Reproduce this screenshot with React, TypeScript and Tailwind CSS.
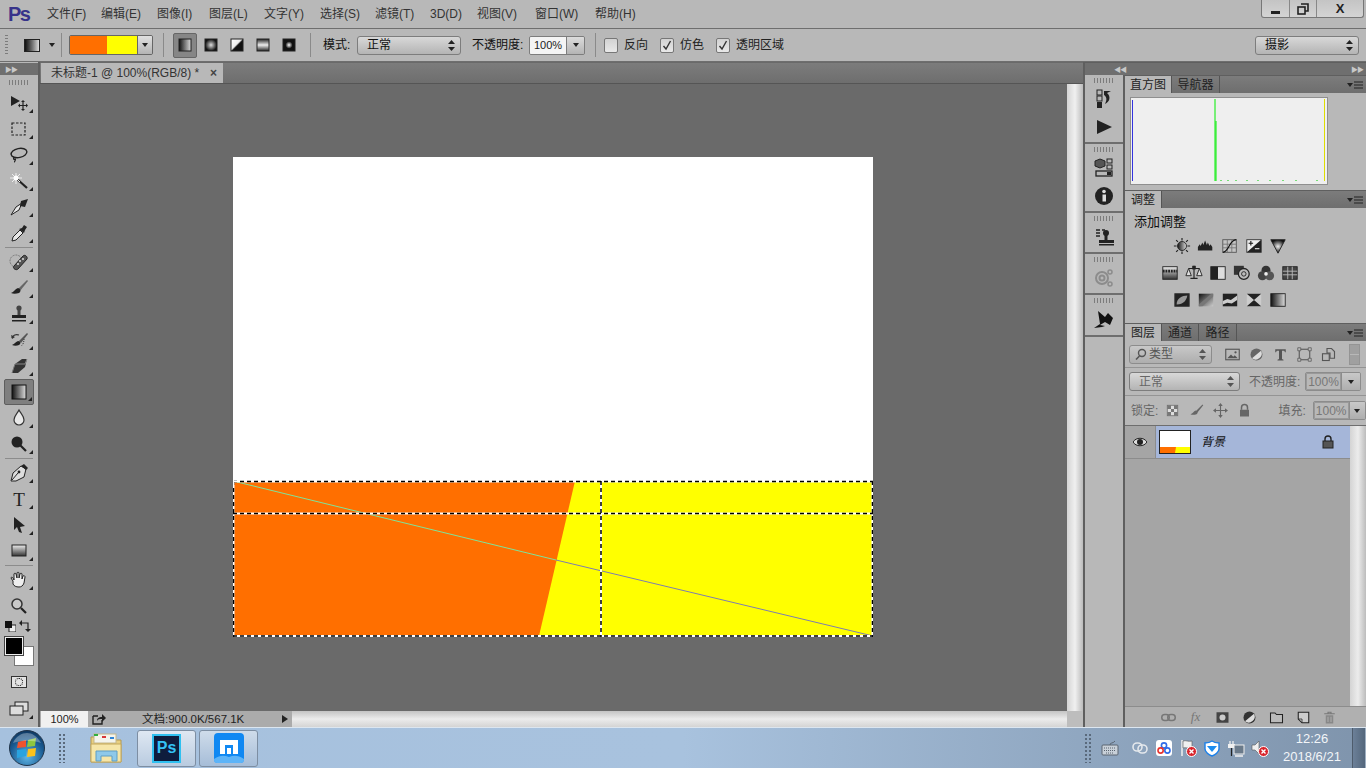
import type { ReactNode } from 'react'

const FONT = "font-['Liberation_Sans','Noto_Sans_CJK_SC',sans-serif]"

function Grip({ w = 'w-[28px]' }: { w?: string }) {
  return <div className={`${w} h-[5px] bg-[repeating-linear-gradient(90deg,#7c7c7c_0_1px,transparent_1px_3px)]`} />
}

function Ico({ size = 20, children }: { size?: number; children: ReactNode }) {
  return (
    <svg width={size} height={size} viewBox="0 0 20 20" className="block shrink-0">
      <defs>
        <linearGradient id="gh" x1="0" x2="1" y1="0" y2="0">
          <stop offset="0" stopColor="#111" />
          <stop offset="1" stopColor="#ddd" />
        </linearGradient>
        <linearGradient id="gv" x1="0" x2="0" y1="0" y2="1">
          <stop offset="0" stopColor="#eee" />
          <stop offset="1" stopColor="#333" />
        </linearGradient>
        <linearGradient id="gd" x1="0" x2="1" y1="0" y2="1">
          <stop offset="0" stopColor="#111" />
          <stop offset="1" stopColor="#ccc" />
        </linearGradient>
        <radialGradient id="gr">
          <stop offset="0" stopColor="#eee" />
          <stop offset="1" stopColor="#111" />
        </radialGradient>
      </defs>
      {children}
    </svg>
  )
}

function Tool({ children, corner = true, active = false, sep = false }: { children: ReactNode; corner?: boolean; active?: boolean; sep?: boolean }) {
  return (
    <>
      {sep && <div className="h-px mx-[5px] my-[1px] bg-[#8c8c8c]" />}
      <div className={`relative h-[26px] flex items-center justify-center ${active ? 'mx-[4px] rounded-[2px] border border-[#5e5e5e] bg-[#7f7f7f]' : ''}`}>
        {children}
        {corner && <span className={`absolute bottom-[3px] w-0 h-0 border-l-[4px] border-l-transparent border-b-[4px] border-b-[#222] ${active ? 'right-[1px]' : 'right-[5px]'}`} />}
      </div>
    </>
  )
}

function Tools() {
  return (
    <div className="flex flex-col">
      <Tool>
        <Ico><path d="M2 3l9 5-9 5z" fill="#222" /><path d="M14 8v9M10 12.5h8" stroke="#222" strokeWidth="1.2" /><path d="M14 7l-2 2h4zM14 18l-2-2h4zM9 12.5l2-2v4zM19 12.5l-2-2v4z" fill="#222" /></Ico>
      </Tool>
      <Tool>
        <Ico><rect x="3" y="4" width="13" height="12" fill="none" stroke="#222" strokeWidth="1.2" strokeDasharray="2.5 1.5" /></Ico>
      </Tool>
      <Tool>
        <Ico><ellipse cx="10" cy="8" rx="8" ry="4.5" transform="rotate(-12 10 8)" fill="none" stroke="#222" strokeWidth="1.4" /><path d="M5 12c-1 2 0 3 1 2s0 3-1 3" fill="none" stroke="#222" strokeWidth="1.3" /></Ico>
      </Tool>
      <Tool>
        <Ico><path d="M8 8l10 9" stroke="#222" strokeWidth="2.2" /><path d="M7 2v11M1 7h12M3 3l8 8M11 3l-8 8" stroke="#eee" strokeWidth="1" /><circle cx="7" cy="7" r="2.5" fill="#fff" /></Ico>
      </Tool>
      <Tool>
        <Ico><path d="M2 18l5-8 6-4-3 7z" fill="#e8e8e8" stroke="#222" /><path d="M12 4l7-2-3 8-5-1z" fill="#222" /></Ico>
      </Tool>
      <Tool>
        <Ico><path d="M3 18l1-4 7-7 3 3-7 7z" fill="#e8e8e8" stroke="#222" /><path d="M10 6l3-1 2-3 3 2-2 3-1 3z" fill="#222" /></Ico>
      </Tool>
      <Tool sep>
        <Ico><circle cx="7" cy="9" r="6" fill="none" stroke="#777" strokeDasharray="2 1" /><path d="M5 14L14 4c2-2 5 1 4 3l-9 10c-2 2-6-1-4-3z" fill="#555" stroke="#222" /><circle cx="11" cy="9" r="1" fill="#ddd" /><circle cx="9" cy="12" r="1" fill="#ddd" /><circle cx="14" cy="7" r="1" fill="#ddd" /></Ico>
      </Tool>
      <Tool>
        <Ico><path d="M9 11L18 2l1 1-8 10z" fill="#666" /><path d="M9 10c3 1 3 4 1 5-3 1-6 1-8 0 3-1 4-4 7-5z" fill="#222" /></Ico>
      </Tool>
      <Tool>
        <Ico><circle cx="10" cy="4" r="2.6" fill="#444" /><path d="M8.5 6h3v5h-3z" fill="#444" /><path d="M3 11h14v3H3z" fill="#222" /><path d="M3 16h14v1.5H3z" fill="#222" /></Ico>
      </Tool>
      <Tool>
        <Ico><path d="M10 11L18 3l1 1-7 9z" fill="#555" /><path d="M9 11c3 0 3 3 1 4-2 1-5 1-7 0 3-1 3-3 6-4z" fill="#222" /><path d="M3 8c1-3 4-4 7-3" fill="none" stroke="#333" strokeWidth="1.3" /><path d="M2 5l1 4 3-2z" fill="#333" /><path d="M15 9c0 3-1 6-3 7" fill="none" stroke="#333" strokeDasharray="1 1" /></Ico>
      </Tool>
      <Tool>
        <Ico><path d="M6 8l7-5h5l-2 8-7 6H3z" fill="#333" /><path d="M6 8h10l2-5" fill="none" stroke="#888" /><path d="M6 8L3 17" stroke="#777" /></Ico>
      </Tool>
      <Tool active>
        <Ico><rect x="3" y="3" width="14" height="14" fill="url(#gh)" stroke="#111" /></Ico>
      </Tool>
      <Tool>
        <Ico><path d="M10 2c2 4 5 6 5 10a5 5 0 0 1-10 0c0-4 3-6 5-10z" fill="#e8e8e8" stroke="#333" strokeWidth="1.2" /></Ico>
      </Tool>
      <Tool>
        <Ico><circle cx="8" cy="8" r="5.5" fill="#222" /><path d="M11 11l6 6" stroke="#222" strokeWidth="2.2" /></Ico>
      </Tool>
      <Tool sep>
        <Ico><path d="M2 18l2-8 8-7 5 3-2 8-8 4z" fill="#ddd" stroke="#222" /><path d="M12 3l3-2 4 4-2 2z" fill="#222" /><path d="M3 17l6-7" stroke="#222" /><circle cx="10" cy="9" r="1.4" fill="#222" /></Ico>
      </Tool>
      <Tool>
        <svg width="20" height="20" viewBox="0 0 20 20" className="block"><text x="10" y="17" textAnchor="middle" fontFamily="Liberation Serif" fontSize="19" fill="#222">T</text></svg>
      </Tool>
      <Tool>
        <Ico><path d="M5 2l11 9-5 1 2 6-3-1-2-5-3 3z" fill="#222" /></Ico>
      </Tool>
      <Tool>
        <Ico><rect x="3" y="4" width="14" height="11" fill="url(#gv)" stroke="#222" /></Ico>
      </Tool>
      <Tool sep>
        <Ico><path d="M4 11L2 8c0-1 1-1 2 0l1 2 0-6c0-1 2-1 2 0l1 4V3c0-1 2-1 2 0v5l1-4c0-1 2-1 2 0v5l1-3c1-1 2 0 2 1l-1 6c-1 3-3 4-5 4-3 0-5-1-6-3z" fill="#eee" stroke="#222" /></Ico>
      </Tool>
      <Tool corner={false}>
        <Ico><circle cx="8" cy="8" r="5" fill="#c8c8c8" stroke="#333" strokeWidth="1.5" /><path d="M12 12l5 5" stroke="#222" strokeWidth="2.2" /></Ico>
      </Tool>
    </div>
  )
}

function ColorWells() {
  return (
    <div className="flex flex-col px-[4px]">
      <div className="flex items-center justify-between h-[14px] px-[1px]">
        <svg width="11" height="11" viewBox="0 0 11 11" className="block"><rect x="4" y="4" width="7" height="7" fill="#eee" stroke="#222" /><rect x="0" y="0" width="7" height="7" fill="#111" /></svg>
        <svg width="12" height="12" viewBox="0 0 12 12" className="block mr-[2px]"><path d="M2 3h7v7" fill="none" stroke="#222" strokeWidth="1.2" /><path d="M0 3l3-3v6zM9 12l3-3H6z" fill="#222" /></svg>
      </div>
      <div className="relative h-[30px] mt-[4px]">
        <div className="absolute left-[10px] top-[9px] w-[20px] h-[20px] bg-white border border-[#777]" />
        <div className="absolute left-[1px] top-0 w-[18px] h-[18px] bg-black border border-[#eee] outline outline-[#444]" />
      </div>
    </div>
  )
}

function ToolBox() {
  return (
    <div className="w-[40px] flex flex-col shrink-0 bg-[#b8b8b8] border-r-2 border-[#5f5f5f]">
      <div className="h-[12px] mt-[1px] bg-[#6f6f6f] flex items-center pl-[5px]">
        <span className="text-[7px] leading-none text-[#c8c8c8] tracking-[-1px]">▶▶</span>
      </div>
      <div className="h-[15px] flex items-center justify-center"><Grip w="w-[20px]" /></div>
      <Tools />
      <ColorWells />
      <div className="h-[30px] flex items-center justify-center">
        <div className="w-[16px] h-[12px] bg-[#e4e4e4] border border-[#333] flex items-center justify-center">
          <div className="w-[8px] h-[8px] rounded-full border border-dotted border-black" />
        </div>
      </div>
      <div className="relative h-[24px] flex items-center justify-center">
        <svg width="20" height="16" viewBox="0 0 20 16" className="block"><rect x="6" y="1" width="13" height="9" fill="#ddd" stroke="#222" /><rect x="1" y="5" width="13" height="9" fill="#ddd" stroke="#222" /></svg>
        <span className="absolute bottom-[2px] right-[5px] w-0 h-0 border-l-[4px] border-l-transparent border-b-[4px] border-b-[#222]" />
      </div>
    </div>
  )
}

function Sep() {
  return <div className="w-px h-[24px] bg-[#8a8a8a] shrink-0" />
}

function Caret() {
  return <span className="block w-0 h-0 border-x-[3px] border-x-transparent border-t-[4px] border-t-[#222]" />
}

function UpDown({ color = '#333' }: { color?: string }) {
  return (
    <svg width="7" height="11" viewBox="0 0 7 11" className="block"><path d="M0 4l3.5-4L7 4zM0 7l3.5 4L7 7z" fill={color} /></svg>
  )
}

function Select({ label, w, dim = false }: { label: string; w: string; dim?: boolean }) {
  return (
    <div className={`${w} h-[19px] rounded-[3px] border border-[#7d7d7d] bg-linear-to-b from-[#d8d8d8] to-[#b4b4b4] flex items-center justify-between pl-[9px] pr-[5px] shrink-0`}>
      <span className={`text-[12px] leading-none ${dim ? 'text-[#666]' : 'text-[#111]'}`}>{label}</span>
      <UpDown color={dim ? '#555' : '#222'} />
    </div>
  )
}

function Check({ checked, label, className }: { checked: boolean; label: string; className: string }) {
  return (
    <div className={`flex items-center gap-[6px] ${className}`}>
      <div className="w-[14px] h-[15px] rounded-[2px] border border-[#777] bg-linear-to-b from-[#d2d2d2] to-[#e8e8e8] flex items-center justify-center">
        {checked && <svg width="10" height="11" viewBox="0 0 10 11" className="block"><path d="M1.5 6l2.5 3 4.5-8" fill="none" stroke="#333" strokeWidth="1.4" /></svg>}
      </div>
      <span className="text-[12px] text-[#222]">{label}</span>
    </div>
  )
}

const menus: [string, string][] = [
  ['文件(F)', 'w-[54px]'],
  ['编辑(E)', 'w-[56px]'],
  ['图像(I)', 'w-[52px]'],
  ['图层(L)', 'w-[55px]'],
  ['文字(Y)', 'w-[56px]'],
  ['选择(S)', 'w-[55px]'],
  ['滤镜(T)', 'w-[55px]'],
  ['3D(D)', 'w-[47px]'],
  ['视图(V)', 'w-[58px]'],
  ['窗口(W)', 'w-[60px]'],
  ['帮助(H)', 'w-[50px]'],
]

function MenuBar() {
  return (
    <div className="h-[29px] shrink-0 flex items-center bg-[#b8b8b8] border-b border-[#6e6e6e]">
      <span className="w-[47px] pl-[8px] text-[#37338a] text-[20px] leading-none font-bold tracking-[-1.5px] font-['Liberation_Sans']">Ps</span>
      {menus.map(([label, w]) => (
        <span key={label} className={`${w} text-[12px] text-[#333] whitespace-nowrap`}>{label}</span>
      ))}
      <div className="ml-auto mr-[2px] self-start flex h-[18px] border border-t-0 border-[#777] rounded-b-[3px] bg-linear-to-b from-[#c4c4c4] to-[#d4d4d4]">
        <div className="w-[28px] flex items-end justify-center pb-[3px] border-r border-[#888]"><div className="w-[9px] h-[3px] bg-[#222]" /></div>
        <div className="w-[27px] flex items-center justify-center border-r border-[#888]">
          <svg width="12" height="12" viewBox="0 0 12 12" className="block"><path d="M4 1h7v7H8" fill="none" stroke="#222" strokeWidth="1.6" /><rect x="1" y="4" width="7" height="7" fill="none" stroke="#222" strokeWidth="1.6" /></svg>
        </div>
        <div className="w-[46px] flex items-center justify-center text-[13px] leading-none font-bold text-[#222] font-['Liberation_Sans']">X</div>
      </div>
    </div>
  )
}

function GradSwatch({ fill }: { fill: string }) {
  return (
    <svg width="16" height="16" viewBox="0 0 16 16" className="block">
      <defs>
        <linearGradient id="o1" x1="0" x2="1" y1="0" y2="0"><stop offset="0" stopColor="#111" /><stop offset="1" stopColor="#ddd" /></linearGradient>
        <radialGradient id="o2"><stop offset="0" stopColor="#ddd" /><stop offset="1" stopColor="#111" /></radialGradient>
        <linearGradient id="o3" x1="0" x2="1" y1="0" y2="1"><stop offset="0" stopColor="#fff" /><stop offset=".45" stopColor="#eee" /><stop offset=".55" stopColor="#111" /><stop offset="1" stopColor="#111" /></linearGradient>
        <linearGradient id="o4" x1="0" x2="0" y1="0" y2="1"><stop offset="0" stopColor="#222" /><stop offset=".5" stopColor="#eee" /><stop offset="1" stopColor="#222" /></linearGradient>
        <radialGradient id="o5"><stop offset="0" stopColor="#fff" /><stop offset=".6" stopColor="#111" /><stop offset="1" stopColor="#111" /></radialGradient>
      </defs>
      <rect x="2" y="2" width="12" height="12" fill={fill} stroke="#222" />
    </svg>
  )
}

function OptionsBar() {
  return (
    <div className="h-[33px] shrink-0 flex items-center bg-[#b8b8b8] border-b border-[#6e6e6e]">
      <div className="w-[3px] h-[20px] ml-[5px] bg-[repeating-linear-gradient(180deg,#7c7c7c_0_1px,transparent_1px_3px)]" />
      <div className="ml-[16px] w-[16px] h-[13px] border border-[#222] bg-linear-to-r from-[#111] to-[#ddd]" />
      <div className="ml-[8px] w-[8px] flex justify-center"><Caret /></div>
      <div className="ml-[5px]"><Sep /></div>
      <div className="ml-[7px] w-[84px] h-[20px] flex border border-[#666] rounded-[2px] overflow-hidden">
        <div className="w-[37px] bg-[#ff6f00]" />
        <div className="w-[30px] bg-[#ffff00]" />
        <div className="flex-1 bg-linear-to-b from-[#e0e0e0] to-[#b4b4b4] flex items-center justify-center border-l border-[#666]"><Caret /></div>
      </div>
      <div className="ml-[10px]"><Sep /></div>
      <div className="ml-[9px] w-[24px] h-[25px] rounded-[2px] border border-[#666] bg-[#868686] flex items-center justify-center"><GradSwatch fill="url(#o1)" /></div>
      <div className="w-[28px] flex justify-center"><GradSwatch fill="url(#o2)" /></div>
      <div className="w-[24px] flex justify-center"><GradSwatch fill="url(#o3)" /></div>
      <div className="w-[28px] flex justify-center"><GradSwatch fill="url(#o4)" /></div>
      <div className="w-[24px] flex justify-center"><GradSwatch fill="url(#o5)" /></div>
      <div className="ml-[9px]"><Sep /></div>
      <span className="ml-[12px] w-[34px] text-[12px] text-[#111]">模式:</span>
      <Select label="正常" w="w-[104px]" />
      <span className="ml-[11px] w-[57px] text-[12px] text-[#111] whitespace-nowrap">不透明度:</span>
      <div className="w-[56px] h-[19px] flex border border-[#7d7d7d] rounded-[2px] overflow-hidden">
        <div className="w-[36px] bg-[#f4f4f4] flex items-center justify-center text-[11px] text-[#222]">100%</div>
        <div className="flex-1 bg-linear-to-b from-[#dcdcdc] to-[#b4b4b4] border-l border-[#7d7d7d] flex items-center justify-center"><Caret /></div>
      </div>
      <div className="ml-[10px]"><Sep /></div>
      <Check checked={false} label="反向" className="ml-[8px]" />
      <Check checked label="仿色" className="ml-[12px]" />
      <Check checked label="透明区域" className="ml-[12px]" />
      <div className="ml-auto mr-[7px]"><Select label="摄影" w="w-[104px]" /></div>
    </div>
  )
}

function Canvas() {
  const ants = 'M0 324.5H640M0 356.5H640M0 479H640M.5 324V480M368 324V480M639.5 324V480'
  return (
    <svg width="640" height="480" viewBox="0 0 640 480" className="block">
      <rect width="640" height="480" fill="#fff" />
      <rect y="324" width="640" height="155" fill="#ffff00" />
      <path d="M0 324H342L306 479H0z" fill="#ff6f00" />
      <path d="M0 324L323 403" stroke="#7fe39a" strokeWidth="1" />
      <path d="M323 403L640 479" stroke="#7d7db0" strokeWidth="1" />
      <path d={ants} fill="none" stroke="#fff" strokeWidth="2" />
      <path d={ants} fill="none" stroke="#000" strokeWidth="1.5" strokeDasharray="4 3" />
      <path d="M0 324.5H4M.5 321V328" stroke="#fff" />
    </svg>
  )
}

function DocArea() {
  return (
    <div className="flex-1 flex flex-col min-w-0 bg-[#6a6a6a]">
      <div className="h-[21px] mt-[1px] shrink-0 flex items-end pl-[1px] bg-linear-to-b from-[#7c7c7c] to-[#6e6e6e] border-b border-[#555]">
        <div className="w-[182px] h-[20px] flex items-center justify-between bg-[#b8b8b8] pl-[10px] pr-[6px]">
          <span className="text-[12px] text-[#333] whitespace-nowrap">未标题-1 @ 100%(RGB/8) *</span>
          <span className="text-[12px] leading-none font-bold text-[#444]">×</span>
        </div>
      </div>
      <div className="flex-1 flex min-h-0">
        <div className="flex-1 pl-[193px] pt-[73px] bg-[#6a6a6a]"><Canvas /></div>
        <div className="w-[16px] bg-linear-to-r from-[#d4d4d4] via-[#f0f0f0] to-[#bcbcbc]" />
      </div>
      <div className="h-[16px] shrink-0 flex items-stretch bg-[#ababab] mb-0">
        <div className="w-[1px] bg-[#ababab]" />
        <div className="w-[47px] bg-[#f0f0f0] flex items-center justify-center text-[11px] text-[#222]">100%</div>
        <div className="w-[4px]" />
        <div className="w-[14px] flex items-center justify-center">
          <svg width="14" height="12" viewBox="0 0 14 12" className="block"><path d="M1 3h5M1 3v8h9V7" fill="none" stroke="#222" strokeWidth="1.4" /><path d="M5 8c0-3 2-4 5-4V1l4 4-4 4V6C8 6 6 6 5 8z" fill="#222" /></svg>
        </div>
        <div className="w-[36px]" />
        <span className="w-[139px] text-[11.5px] leading-[16px] text-[#222] whitespace-nowrap">文档:900.0K/567.1K</span>
        <div className="w-[8px] flex items-center justify-center"><span className="block w-0 h-0 border-y-[4px] border-y-transparent border-l-[6px] border-l-[#222]" /></div>
        <div className="w-[3px]" />
        <div className="flex-1 bg-linear-to-b from-[#c4c4c4] via-[#ececec] to-[#d4d4d4]" />
        <div className="w-[16px] bg-[#bdbdbd]" />
      </div>
    </div>
  )
}

function DockGroup({ h, children }: { h: string; children: ReactNode }) {
  return (
    <div className={`${h} shrink-0 flex flex-col items-center border-b-2 border-[#6e6e6e] bg-[#b8b8b8] gap-[8px]`}>
      <div className="pt-[3px] -mb-[2px]"><Grip w="w-[20px]" /></div>
      {children}
    </div>
  )
}

function Dock() {
  return (
    <div className="w-[42px] shrink-0 flex flex-col border-x-2 border-[#5f5f5f] bg-[#b8b8b8]">
      <DockGroup h="h-[69px]">
        <Ico>
          <rect x="3" y="1" width="5" height="5" fill="none" stroke="#222" /><rect x="3" y="7" width="5" height="5" fill="none" stroke="#222" /><rect x="3" y="13" width="5" height="6" fill="#222" />
          <path d="M10 2h7l-4 2c4 3 3 9-2 11 2-4 2-7-1-9z" fill="#222" />
        </Ico>
        <Ico><path d="M3 3l15 7-15 7z" fill="#222" /></Ico>
      </DockGroup>
      <DockGroup h="h-[69px]">
        <Ico>
          <path d="M6 1l5 2v5l-5 2-5-2V3z" fill="#555" stroke="#222" /><rect x="13" y="1" width="5" height="4" fill="none" stroke="#222" /><rect x="13" y="7" width="5" height="4" fill="none" stroke="#222" /><rect x="2" y="13" width="16" height="5" fill="none" stroke="#222" strokeWidth="1.3" /><rect x="13" y="14" width="4" height="3" fill="#222" />
        </Ico>
        <Ico><circle cx="10" cy="10" r="9" fill="#222" /><rect x="8.5" y="8.5" width="3.5" height="7" fill="#ddd" /><circle cx="10" cy="5.5" r="1.8" fill="#ddd" /></Ico>
      </DockGroup>
      <DockGroup h="h-[41px]">
        <Ico><path d="M2 3h4M2 6h4M2 9h4M8 3h3" stroke="#222" strokeWidth="1.4" /><circle cx="12" cy="6" r="3" fill="#222" /><rect x="10.5" y="8" width="3" height="5" fill="#222" /><rect x="5" y="13" width="15" height="3" fill="#222" /><rect x="5" y="17" width="15" height="1.5" fill="#222" /></Ico>
      </DockGroup>
      <DockGroup h="h-[41px]">
        <Ico><circle cx="8" cy="10" r="6" fill="none" stroke="#8c8c8c" strokeWidth="2" /><circle cx="8" cy="10" r="2.5" fill="none" stroke="#8c8c8c" strokeWidth="2" /><circle cx="16" cy="4" r="2" fill="none" stroke="#8c8c8c" strokeWidth="1.5" /><circle cx="16" cy="16" r="2" fill="none" stroke="#8c8c8c" strokeWidth="1.5" /></Ico>
      </DockGroup>
      <DockGroup h="h-[42px]">
        <Ico><path d="M0 19l6-4L4 2l7 6 3-4 5 5-3 7-5-3-5 3 5 1-3 1z" fill="#111" /></Ico>
      </DockGroup>
      <div className="flex-1" />
    </div>
  )
}

function PanelHead({ tabs }: { tabs: [string, string][] }) {
  return (
    <div className="h-[18px] shrink-0 flex items-stretch bg-linear-to-b from-[#7c7c7c] to-[#6e6e6e] border-t border-[#5f5f5f]">
      {tabs.map(([label, w], i) => (
        <div key={label} className={`${w} flex items-center justify-center text-[12px] border-r border-[#555] ${i === 0 ? 'bg-[#b8b8b8] text-[#222]' : 'text-[#222]'}`}>{label}</div>
      ))}
      <div className="ml-auto mr-[3px] flex items-center gap-[1px]">
        <Caret />
        <svg width="9" height="8" viewBox="0 0 9 8" className="block"><path d="M0 1h9M0 4h9M0 7h9" stroke="#222" /></svg>
      </div>
    </div>
  )
}

function Histogram() {
  return (
    <div className="h-[115px] shrink-0 flex flex-col bg-[#b8b8b8]">
      <PanelHead tabs={[['直方图', 'w-[47px]'], ['导航器', 'w-[48px]']]} />
      <div className="pl-[5px] pt-[4px]">
        <svg width="198" height="88" viewBox="0 0 198 88" className="block">
          <rect x=".5" y=".5" width="197" height="87" fill="#efefef" stroke="#8f8f8f" />
          <path d="M2.5 3V84" stroke="#3333dd" />
          <path d="M85 2V84" stroke="#00ee00" />
          <path d="M86 24V84" stroke="#00ee00" />
          <path d="M194.5 2V84" stroke="#dddd00" />
          <path d="M91 83v1M98 83v1M106 83v1M117 83v1M128 83v1M140 83v1M153 83v1M166 83v1M187 83v1" stroke="#00cc00" />
        </svg>
      </div>
    </div>
  )
}

function AdjustIcon({ children }: { children: ReactNode }) {
  return <div className="w-[24px] flex justify-center"><Ico size={18}>{children}</Ico></div>
}

function Adjustments() {
  return (
    <div className="h-[133px] shrink-0 flex flex-col bg-[#b8b8b8]">
      <PanelHead tabs={[['调整', 'w-[37px]']]} />
      <div className="pl-[9px] pt-[6px] text-[13px] leading-[16px] text-[#111]">添加调整</div>
      <div className="flex flex-col items-center gap-[9px] pt-[7px] pr-[32px]">
        <div className="flex h-[18px]">
          <AdjustIcon><circle cx="10" cy="10" r="5" fill="url(#gh)" stroke="#222" /><path d="M10 1v3M10 16v3M1 10h3M16 10h3M3.5 3.5l2 2M14.5 14.5l2 2M3.5 16.5l2-2M14.5 5.5l2-2" stroke="#222" strokeWidth="1.3" /></AdjustIcon>
          <AdjustIcon><path d="M1 15V11l2-3 1 2 2-4 1 3 2-5 2 5 1-3 2 4 1-2 2 3v4z" fill="#222" /></AdjustIcon>
          <AdjustIcon><rect x="2" y="3" width="15" height="14" fill="#c4c4c4" stroke="#555" /><path d="M7 3v14M12 3v14M2 8h15M2 12h15" stroke="#777" /><path d="M2 17c7 0 7-14 15-14" fill="none" stroke="#111" strokeWidth="1.3" /></AdjustIcon>
          <AdjustIcon><rect x="2" y="3" width="16" height="14" fill="#eee" stroke="#333" /><path d="M2 17L18 3v14z" fill="#222" /><path d="M4 7h5M6.5 4.5v5" stroke="#111" strokeWidth="1.2" /><path d="M11 13h5" stroke="#eee" strokeWidth="1.2" /></AdjustIcon>
          <AdjustIcon><path d="M2 3h16l-8 15z" fill="url(#gr)" stroke="#222" /></AdjustIcon>
        </div>
        <div className="flex h-[18px]">
          <AdjustIcon><rect x="2" y="3" width="16" height="14" fill="url(#gv)" stroke="#222" /><path d="M2 8h16" stroke="#222" strokeWidth="3" strokeDasharray="2 1" /></AdjustIcon>
          <AdjustIcon><path d="M10 2v14M4 5h12M6 16h8" stroke="#222" strokeWidth="1.3" /><path d="M4 5L1 13h6zM16 5l-3 8h6z" fill="#ddd" stroke="#222" /><rect x="8" y="2" width="4" height="4" fill="#222" /></AdjustIcon>
          <AdjustIcon><rect x="2" y="3" width="16" height="14" fill="#ddd" stroke="#222" /><rect x="2" y="3" width="8" height="14" fill="#222" /></AdjustIcon>
          <AdjustIcon><rect x="1" y="2" width="11" height="10" fill="#333" /><circle cx="12" cy="11" r="6" fill="#bbb" stroke="#222" strokeWidth="1.4" /><circle cx="12" cy="11" r="2.5" fill="none" stroke="#222" /></AdjustIcon>
          <AdjustIcon><circle cx="10" cy="7" r="5" fill="#333" /><circle cx="6" cy="13" r="5" fill="#444" /><circle cx="14" cy="13" r="5" fill="#555" /><circle cx="10" cy="11" r="2" fill="#eee" /></AdjustIcon>
          <AdjustIcon><rect x="2" y="3" width="16" height="14" fill="#444" stroke="#222" /><path d="M7.5 3v14M12.5 3v14M2 8h16M2 12h16" stroke="#bbb" /></AdjustIcon>
        </div>
        <div className="flex h-[18px]">
          <AdjustIcon><rect x="2" y="3" width="16" height="14" fill="#222" stroke="#333" /><path d="M4 15c8 0 11-5 12-10-6 0-12 3-12 10z" fill="#999" /></AdjustIcon>
          <AdjustIcon><rect x="2" y="3" width="16" height="14" fill="url(#gd)" /><path d="M2 15L16 3h2v3L6 17H2z" fill="#777" /></AdjustIcon>
          <AdjustIcon><rect x="2" y="3" width="16" height="14" fill="#222" /><path d="M2 11l5-2 4 1 7-5v5l-6 4-5-1-5 2z" fill="#ccc" /></AdjustIcon>
          <AdjustIcon><rect x="2" y="3" width="16" height="14" fill="#ccc" /><path d="M2 3h16L2 17h16z" fill="#222" /></AdjustIcon>
          <AdjustIcon><rect x="2" y="3" width="16" height="14" fill="url(#gh)" stroke="#222" /></AdjustIcon>
        </div>
      </div>
    </div>
  )
}

function DimIcon({ children, w = 'w-[24px]' }: { children: ReactNode; w?: string }) {
  return <div className={`${w} flex justify-center`}><Ico size={15}>{children}</Ico></div>
}

function SmallInput() {
  return (
    <div className="w-[56px] h-[19px] flex border border-[#8c8c8c] rounded-[2px] overflow-hidden">
      <div className="w-[35px] flex items-center justify-center text-[12px] text-[#777] border border-[#999]">100%</div>
      <div className="flex-1 bg-linear-to-b from-[#c8c8c8] to-[#aeaeae] border-l border-[#8c8c8c] flex items-center justify-center"><Caret /></div>
    </div>
  )
}

function Layers() {
  return (
    <div className="flex-1 flex flex-col min-h-0 bg-[#a5a5a5]">
      <PanelHead tabs={[['图层', 'w-[37px]'], ['通道', 'w-[37px]'], ['路径', 'w-[38px]']]} />
      <div className="h-[27px] shrink-0 flex items-center pl-[4px] bg-[#b8b8b8] border-b border-[#949494]">
        <div className="w-[83px] h-[19px] rounded-[3px] border border-[#8c8c8c] bg-linear-to-b from-[#c8c8c8] to-[#aeaeae] flex items-center justify-between px-[5px]">
          <span className="flex items-center gap-[2px] text-[12px] text-[#555]">
            <svg width="12" height="12" viewBox="0 0 12 12" className="block"><circle cx="7" cy="5" r="3.5" fill="none" stroke="#555" strokeWidth="1.4" /><path d="M4.5 8L1 11.5" stroke="#555" strokeWidth="1.6" /></svg>
            类型
          </span>
          <UpDown color="#555" />
        </div>
        <div className="flex ml-[8px]">
          <DimIcon><rect x="1" y="3" width="18" height="14" fill="none" stroke="#555" strokeWidth="1.5" /><path d="M3 15l5-5 3 3 2-2 4 4z" fill="#555" /><circle cx="14" cy="7" r="1.5" fill="#555" /></DimIcon>
          <DimIcon><circle cx="10" cy="10" r="8" fill="#666" /><path d="M16 5A8 8 0 0 1 4 15z" fill="#ddd" /></DimIcon>
          <DimIcon><path d="M3 3h14v4h-1l-1-2h-3v11l2 1v1H6v-1l2-1V5H5L4 7H3z" fill="#555" /></DimIcon>
          <DimIcon><rect x="3" y="3" width="14" height="14" fill="none" stroke="#555" strokeWidth="1.4" /><path d="M1 1h4v4H1zM15 1h4v4h-4zM1 15h4v4H1zM15 15h4v4h-4z" fill="#bbb" stroke="#555" /></DimIcon>
          <DimIcon><path d="M8 2h6l4 4v9H12V8H8z" fill="none" stroke="#555" strokeWidth="1.5" /><rect x="2" y="9" width="9" height="9" fill="none" stroke="#555" strokeWidth="1.5" /></DimIcon>
        </div>
        <div className="ml-[9px] w-[11px] h-[21px] flex flex-col gap-[1px] border border-[#949494]">
          <div className="flex-1 bg-[#a0a0a0]" />
          <div className="flex-1 bg-[#a0a0a0]" />
        </div>
      </div>
      <div className="h-[28px] shrink-0 flex items-center pl-[4px] bg-[#b8b8b8] border-b border-[#949494]">
        <Select label="正常" w="w-[111px]" dim />
        <span className="ml-[9px] w-[56px] text-[12px] text-[#666] whitespace-nowrap">不透明度:</span>
        <SmallInput />
      </div>
      <div className="h-[30px] shrink-0 flex items-center pl-[6px] bg-[#b8b8b8] border-b border-[#6e6e6e]">
        <span className="w-[31px] text-[12px] text-[#666]">锁定:</span>
        <div className="flex">
          <DimIcon><rect x="3" y="3" width="14" height="14" fill="#ddd" stroke="#666" /><path d="M3 3h5v5H3zM12 3h5v5h-5zM8 8h4v4H8zM3 12h5v5H3zM12 12h5v5h-5z" fill="#777" /></DimIcon>
          <DimIcon><path d="M9 11L18 2l1 1-8 10z" fill="#666" /><path d="M9 10c3 1 3 4 1 5-3 1-6 1-8 0 3-1 4-4 7-5z" fill="#666" /></DimIcon>
          <DimIcon><path d="M10 2v16M2 10h16" stroke="#666" strokeWidth="1.5" /><path d="M10 0l-3 4h6zM10 20l-3-4h6zM0 10l4-3v6zM20 10l-4-3v6z" fill="#666" /></DimIcon>
          <DimIcon><path d="M6 9V6a4 4 0 0 1 8 0v3" fill="none" stroke="#666" strokeWidth="2" /><rect x="4" y="9" width="12" height="9" fill="#666" /></DimIcon>
        </div>
        <span className="ml-[22px] w-[36px] text-[12px] text-[#666]">填充:</span>
        <SmallInput />
      </div>
      <div className="flex-1 flex min-h-0">
        <div className="flex-1 flex flex-col">
          <div className="h-[33px] flex border-b border-[#8c8c8c]">
            <div className="w-[31px] flex items-center justify-center bg-[#a5a5a5] border-r border-[#8c8c8c]">
              <svg width="14" height="10" viewBox="0 0 14 10" className="block"><path d="M0 5c3-5 11-5 14 0-3 5-11 5-14 0z" fill="#ddd" stroke="#222" /><circle cx="7" cy="5" r="3" fill="#222" /></svg>
            </div>
            <div className="flex-1 flex items-center pl-[3px] bg-[#a5b6d9]">
              <svg width="32" height="24" viewBox="0 0 32 24" className="block shrink-0"><rect x=".5" y=".5" width="31" height="23" fill="#fff" stroke="#222" /><rect x="1" y="17" width="30" height="6" fill="#ffff00" /><path d="M1 17H17L16 23H1z" fill="#ff6f00" /></svg>
              <span className="ml-[10px] text-[12px] italic text-[#111]">背景</span>
              <svg width="12" height="14" viewBox="0 0 12 14" className="block ml-auto mr-[16px]"><path d="M3 6V4a3 3 0 0 1 6 0v2" fill="none" stroke="#222" strokeWidth="1.4" /><rect x="1" y="6" width="10" height="7" fill="#555" stroke="#222" /></svg>
            </div>
          </div>
        </div>
        <div className="w-[16px] bg-linear-to-r from-[#d4d4d4] via-[#ececec] to-[#bcbcbc]" />
      </div>
      <div className="h-[21px] shrink-0 flex items-center justify-end pr-[23px] bg-[#b0b0b0] border-t border-[#8c8c8c]">
        <div className="flex">
          <div className="w-[27px] flex justify-center"><Ico size={15}><rect x="1" y="6" width="10" height="8" rx="4" fill="none" stroke="#777" strokeWidth="2" /><rect x="9" y="6" width="10" height="8" rx="4" fill="none" stroke="#777" strokeWidth="2" /></Ico></div>
          <div className="w-[27px] text-center text-[13px] leading-none italic text-[#777] font-['Liberation_Serif']">fx</div>
          <div className="w-[27px] flex justify-center"><Ico size={15}><rect x="2" y="3" width="16" height="14" fill="#444" /><circle cx="10" cy="10" r="4" fill="#ccc" /></Ico></div>
          <div className="w-[27px] flex justify-center"><Ico size={15}><circle cx="10" cy="10" r="8" fill="#333" /><path d="M16 5A8 8 0 0 1 4 15z" fill="#ddd" /></Ico></div>
          <div className="w-[27px] flex justify-center"><Ico size={15}><path d="M2 4h6l2 2h8v11H2z" fill="#bbb" stroke="#222" strokeWidth="1.4" /></Ico></div>
          <div className="w-[26px] flex justify-center"><Ico size={15}><path d="M3 3h14v14H8l-5-5z" fill="#ccc" stroke="#222" strokeWidth="1.4" /><path d="M3 12h5v5" fill="none" stroke="#222" /></Ico></div>
          <div className="w-[27px] flex justify-center"><Ico size={15}><path d="M3 5h14M8 5V3h4v2" fill="none" stroke="#777" strokeWidth="1.5" /><path d="M5 7h10v11H5z" fill="#888" /><path d="M8 9v7M12 9v7" stroke="#bbb" /></Ico></div>
        </div>
      </div>
    </div>
  )
}

function RightColumn() {
  return (
    <div className="w-[283px] shrink-0 flex flex-col">
      <div className="h-[12px] shrink-0 mt-[1px] flex items-center justify-between pl-[29px] pr-[3px] bg-[#6f6f6f] border-l-2 border-[#5f5f5f]">
        <span className="text-[7px] leading-none text-[#c8c8c8] tracking-[-1px]">◀◀</span>
        <span className="text-[7px] leading-none text-[#c8c8c8] tracking-[-1px]">▶▶</span>
      </div>
      <div className="flex-1 flex min-h-0">
        <Dock />
        <div className="flex-1 flex flex-col min-w-0">
          <Histogram />
          <Adjustments />
          <Layers />
        </div>
      </div>
    </div>
  )
}

function TrayIcon({ children, w = 'w-[24px]' }: { children: ReactNode; w?: string }) {
  return <div className={`${w} flex justify-center`}>{children}</div>
}

function RedX() {
  return (
    <g><circle cx="12.5" cy="12.5" r="5" fill="#d8242c" stroke="#fff" /><path d="M10.5 10.5l4 4M14.5 10.5l-4 4" stroke="#fff" strokeWidth="1.4" /></g>
  )
}

function TaskDots() {
  return <div className="w-[8px] h-[30px] bg-[radial-gradient(#5a6a7c_1px,transparent_1.2px)] bg-[length:4px_4px]" />
}

function Taskbar() {
  return (
    <div className="h-[41px] shrink-0 flex items-center bg-linear-to-r from-[#a6c1de] via-[#a8c2de] to-[#7f94ac] border-t border-[#dce6f0]">
      <div className="w-[58px] pr-[4px] flex justify-center">
        <svg width="38" height="38" viewBox="0 0 38 38" className="block">
          <defs>
            <radialGradient id="orb" cx=".5" cy=".75" r=".8"><stop offset="0" stopColor="#5fb6e6" /><stop offset=".6" stopColor="#1a5c94" /><stop offset="1" stopColor="#0c2f55" /></radialGradient>
          </defs>
          <circle cx="19" cy="19" r="17.5" fill="url(#orb)" stroke="#20344a" />
          <path d="M10 13l8-2v7l-9 1z" fill="#f0532e" />
          <path d="M20 11l8-2-1 8-8 1z" fill="#8ec63f" />
          <path d="M9 21l9-1v7l-9 2z" fill="#29a3e0" />
          <path d="M20 20l8-1-1 8-8 1z" fill="#fcc21b" />
          <path d="M5 14c3-7 9-10 14-10s10 3 14 10c-8-3-20-3-28 0z" fill="#fff" opacity=".3" />
        </svg>
      </div>
      <TaskDots />
      <div className="w-[23px]" />
      <svg width="34" height="32" viewBox="0 0 34 32" className="block">
        <path d="M2 5h12l3 3h15v22H2z" fill="#e8cf80" stroke="#b39a52" />
        <rect x="5" y="2" width="22" height="9" fill="#f4f4ec" stroke="#c4b88c" />
        <rect x="5" y="2" width="4" height="2" fill="#2fae3e" /><rect x="13" y="4" width="4" height="2" fill="#d83838" /><rect x="21" y="5" width="4" height="2" fill="#2f86d8" />
        <path d="M2 12h30v18H2z" fill="#f6e6a8" stroke="#c4a85c" />
        <path d="M7 29V19h21v10h-5v-5H12v5z" fill="#8ec9ea" stroke="#5f9ec4" />
      </svg>
      <div className="w-[14px]" />
      <div className="w-[59px] h-[37px] rounded-[3px] border border-[#7d8ea2] bg-linear-to-b from-[#dfe8f2] to-[#b9cbe0] flex items-center justify-center">
        <div className="w-[29px] h-[29px] bg-[#0f1d3d] border-2 border-[#2fc0f0] flex items-center justify-center text-[#34c3f5] text-[16px] font-bold leading-none font-['Liberation_Sans']">Ps</div>
      </div>
      <div className="w-[3px]" />
      <div className="w-[59px] h-[37px] rounded-[3px] border border-[#7d8ea2] bg-linear-to-b from-[#cfdcea] to-[#a6bdd8] flex items-center justify-center">
        <svg width="30" height="30" viewBox="0 0 30 30" className="block">
          <rect width="30" height="30" rx="4" fill="#1088f2" />
          <path d="M6 21V7h18v14h-5V12h-8v9z" fill="#fff" />
          <rect x="13" y="15" width="4" height="6" fill="#fff" />
          <path d="M0 26c6-4 10-4 15-2 5-2 9-2 15 2v1a3 3 0 0 1-3 3H3a3 3 0 0 1-3-3z" fill="#5db4f8" />
        </svg>
      </div>
      <div className="flex-1" />
      <TaskDots />
      <TrayIcon w="w-[36px]">
        <svg width="18" height="16" viewBox="0 0 18 16" className="block"><rect x="1" y="5" width="16" height="10" rx="1" fill="#c8d0d8" stroke="#5a6470" /><path d="M3 8h12M3 10.5h12M5 13h8" stroke="#5a6470" strokeDasharray="1 1" /><path d="M9 5c0-3 3-1 5-4" fill="none" stroke="#5a6470" /></svg>
      </TrayIcon>
      <TrayIcon>
        <svg width="16" height="14" viewBox="0 0 16 14" className="block"><rect x="1" y="2" width="9" height="8" rx="4" fill="none" stroke="#e4e8ec" strokeWidth="1.6" /><rect x="6" y="4" width="9" height="8" rx="4" fill="none" stroke="#e4e8ec" strokeWidth="1.6" /></svg>
      </TrayIcon>
      <TrayIcon>
        <svg width="16" height="16" viewBox="0 0 16 16" className="block"><rect width="16" height="16" rx="3" fill="#fff" /><circle cx="8" cy="5.5" r="2.6" fill="none" stroke="#2f6be8" strokeWidth="1.6" /><circle cx="4.6" cy="10.5" r="2.6" fill="none" stroke="#e8342f" strokeWidth="1.6" /><circle cx="11.4" cy="10.5" r="2.6" fill="none" stroke="#2f6be8" strokeWidth="1.6" /></svg>
      </TrayIcon>
      <TrayIcon>
        <svg width="18" height="18" viewBox="0 0 18 18" className="block"><path d="M3 1v16" stroke="#f0f0f0" strokeWidth="1.5" /><path d="M4 2c3-1 5 1 9 0v7c-4 1-6-1-9 0z" fill="#f0f0f0" stroke="#555" strokeWidth=".6" /><RedX /></svg>
      </TrayIcon>
      <TrayIcon>
        <svg width="16" height="17" viewBox="0 0 16 17" className="block"><path d="M8 1c2 1.5 4 2 7 2v6c0 3-4 6-7 7-3-1-7-4-7-7V3c3 0 5-.5 7-2z" fill="#fff" stroke="#1a7fe8" strokeWidth="1.4" /><path d="M3 6h10L8 12z" fill="#1a8cf0" /></svg>
      </TrayIcon>
      <TrayIcon>
        <svg width="18" height="17" viewBox="0 0 18 17" className="block"><path d="M3 1v5M6 1v5" stroke="#f0f0f0" strokeWidth="1.3" /><rect x="1" y="4" width="7" height="4" fill="#f0f0f0" /><path d="M4.5 8v8" stroke="#222" strokeWidth="1.2" /><rect x="7" y="5" width="10" height="9" fill="#6a7a8a" stroke="#f0f0f0" /><path d="M8 16h8" stroke="#f0f0f0" strokeWidth="1.5" /></svg>
      </TrayIcon>
      <TrayIcon>
        <svg width="18" height="18" viewBox="0 0 18 18" className="block"><path d="M1 6h3l4-4v13l-4-4H1z" fill="#f0f0f0" stroke="#555" strokeWidth=".6" /><RedX /></svg>
      </TrayIcon>
      <div className="w-[80px] flex flex-col items-center text-[13px] leading-[18px] text-[#f2f5f8] font-['Liberation_Sans']">
        <span>12:26</span>
        <span>2018/6/21</span>
      </div>
      <div className="w-[14px] h-full border-l border-[#4e5c6c] bg-linear-to-r from-[#6c8098] to-[#54677c] border-r border-r-[#9fb0c2]" />
    </div>
  )
}

export default function App() {
  return (
    <div className={`w-[1366px] h-[768px] flex flex-col overflow-hidden ${FONT}`}>
      <MenuBar />
      <OptionsBar />
      <div className="flex-1 flex min-h-0 bg-[#5f5f5f]">
        <ToolBox />
        <DocArea />
        <RightColumn />
      </div>
      <Taskbar />
    </div>
  )
}
